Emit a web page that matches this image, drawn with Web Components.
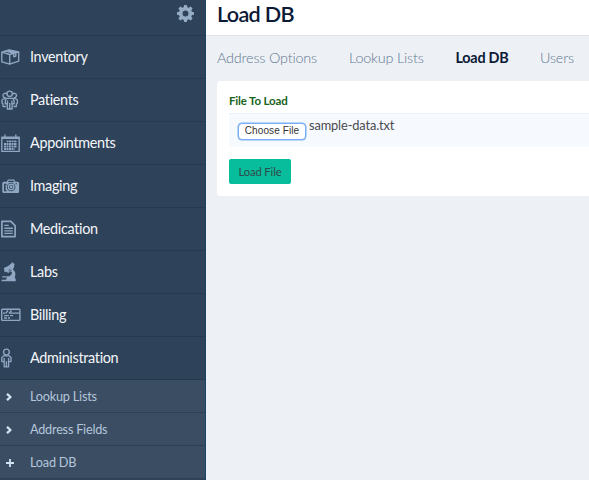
<!DOCTYPE html>
<html lang="en">
<head>
<meta charset="utf-8">
<title>Load DB</title>
<style>
html,body{margin:0;height:100%;overflow:hidden;background:#edf1f5;font-family:Lato,"Liberation Sans",sans-serif}
</style>
</head>
<body>
<app-shell></app-shell>
<script>
const define = (name, html, setup) => customElements.define(name, class extends HTMLElement {
  connectedCallback() {
    if (this.shadowRoot) return;
    this.attachShadow({mode: 'open'}).innerHTML = html;
    if (setup) setup(this, this.shadowRoot);
  }
});

const icons = {
  gear: '<path fill="currentColor" stroke="none" fill-rule="evenodd" d="M8 0h3l.6 2.6 1.5.6 2.3-1.4 2 2-1.4 2.3.6 1.5L19 8v3l-2.4.5-.6 1.5 1.4 2.2-2 2.1-2.3-1.4-1.5.6L11 19H8l-.6-2.5-1.5-.6-2.3 1.4-2-2.1L3 13l-.6-1.5L0 11V8l2.4-.4L3 6.1 1.6 3.8l2-2 2.3 1.4 1.5-.6zM9.5 6.2a3.3 3.3 0 1 0 0 6.6 3.3 3.3 0 0 0 0-6.6z"/>',
  box: '<path d="M1.8 4.2 9 1.8l9.7 2.1v9.3L9.7 16.2 1.8 13.8zM1.8 4.2l7.9 2.3 9-2.6M9.7 6.5V16M5.2 3.1l8.6 2.1v3.6l2-.7V4.6L8 2.3"/>',
  people: '<g><circle cx="9.7" cy="3.8" r="2.7"/><path d="M7 4.2A2.2 2.2 0 1 0 5.7 7.6M12.5 4.2a2.2 2.2 0 1 1 1.2 3.4M5.7 8.2H4.3L2 10v3l1 1v2.5h2.9M13.7 8.2h1.4l2.3 1.8v3l-1 1v2.5h-2.9M6.5 8.4l-1.2 2v3.3h2V19h4.8v-5.3h2v-3.3l-1.3-2zM7.5 10.5v3.3m4.4-3.3v3.3M9.7 13v5.6"/></g>',
  calendar: '<path d="M1.8 3.2h17.4v14.2H1.8zM5 .5V4M15.8.5V4"/><path stroke-width="2" d="M2 4h17"/><path stroke-width="1.8" stroke-dasharray="2 .5" d="M6.6 7.4H17M4 10H17M4 12.5H17M4 15H14.5"/>',
  camera: '<path fill="currentColor" stroke="none" fill-rule="evenodd" d="M3.7 2.7h3L8 .5h6.2l1.2 2.2h2.2q1.5 0 1.5 1.5v8.6q0 1.3-1.4 1.3h-14q-1.4 0-1.4-1.3V4.2q0-1.5 1.4-1.5zM8.6 1.7l-.7 1.4h6.4l-.8-1.4zM4 4.7v7.5h2.8v-1H5.6V5.7h1.1v-1zM11.1 3.7a4.3 4.3 0 1 0 0 8.6 4.3 4.3 0 0 0 0-8.6z"/><circle cx="11.1" cy="8" r="2.8"/><circle cx="11.1" cy="8" r=".8"/><path stroke="#2d4259" stroke-width="1" d="M15.5 4.8h1.5"/>',
  page: '<path stroke-width="1.7" d="M1.9 1.4h9l4.2 4.2v11H1.9z"/><path d="M4.3 5.4h4.5M4.3 8.2h8.5M4.3 10.8h8.5M4.3 13.4h8.5"/>',
  microscope: '<path fill="currentColor" stroke="none" d="m12 .3 2.7 1.6-.8 2.2.5.4-3.1 5.8-1.7-.5-1.2 1.1-1.9-1 .4-1.3-3.1-1 .4-1.8 3.1-1.2L10.9 2zM11.8 9.2l1-1.9c2.6 2 3.4 4.8 1.9 8.2l1 1.6v2.2H1.6v-1.6h4.3l1.1-2.1H2.2v-1.4h6.9q3.6-1.7 2.7-5z"/><path d="m4.4 9.3 4-1.4 3.2-5" stroke-width="2.2"/><circle cx="10" cy="8.5" r="1" stroke="#2d4259" stroke-width=".6"/>',
  card: '<rect x="1.7" y="1.2" width="18.2" height="11.2" rx=".7" stroke-width="1.4"/><path d="M10 5.1h9.5M4 7.6h5m1 0h3M4 10h3m1 0h2M3 5.1h2"/><path stroke-width="1.4" d="m5.5 5.5 2.5-3M9 5.5l2.5-3"/>',
  person: '<circle cx="6.4" cy="4" r="2.9"/><path d="M4.5 7.9H3.4L1.8 9.6v4h2.4v5.2h4.4v-5.2H11v-4L9.3 7.9zM4.2 9.9v3.7M8.6 9.9v3.7M6.4 13.3v5"/>',
  chevron: '<path stroke-width="2.3" d="m1 .8 3.5 3.2L1 7.2"/>',
  plus: '<path stroke-width="1.8" d="M4 0v8M0 4h8"/>'
};
const sizes = {gear:[17,17,19,19],box:[20,18,20,18],people:[20,20,20,20],calendar:[20,18,20,18],camera:[20,15,20,15],page:[18,18,18,18],microscope:[18,20,18,20],card:[21,14,21,14],person:[14,20,14,20],chevron:[6,8,6,8],plus:[8,8,8,8]};

define('ui-icon', '<style>:host{display:block;line-height:0}svg{display:block;fill:none;stroke:currentColor;stroke-width:1.35;stroke-linejoin:round}</style>', (el, root) => {
  const n = el.getAttribute('name'), [w,h,vw,vh] = sizes[n];
  root.innerHTML += `<svg width="${w}" height="${h}" viewBox="0 0 ${vw} ${vh}">${icons[n]}</svg>`;
});

define('nav-item', `<style>
:host{display:grid;grid-template-columns:30px 1fr;align-items:center;box-sizing:border-box;height:43px;border-bottom:1px solid #263a50;color:#f4f6f9;font-size:14.4px;line-height:20px;letter-spacing:-.32px}
ui-icon{color:#8fa7c2}
:host([sub]){height:33px;background:#3b4d63;border-color:#2c4056;color:#b3c6da;font-size:12.7px;letter-spacing:-.22px}
:host([sub]) ui-icon{color:#d0e2f2;padding:1px 0 0 6px}
:host([sub]) span{padding-bottom:1px}
</style><i></i><span><slot></slot></span>`, (el, root) => {
  const i = document.createElement('ui-icon');
  i.setAttribute('name', el.getAttribute('icon'));
  root.querySelector('i').replaceWith(i);
});

define('side-bar', `<style>
:host{display:block;box-sizing:border-box;width:206px;height:480px;background:#2e4259;border-right:1px solid #174565;overflow:hidden}
header{box-sizing:border-box;height:36px;border-bottom:1px solid #263a50;display:flex;justify-content:flex-end;padding:5px 11.5px 0 0;color:#94acc6}
</style>
<header><ui-icon name="gear"></ui-icon></header><nav><slot></slot></nav>`);

define('tab-item', `<style>:host{display:block;font-size:14.4px;line-height:20px;font-weight:300;color:#5f7694;white-space:nowrap;letter-spacing:-.18px}
:host([active]){font-weight:700;color:#0b1a36;letter-spacing:-.25px}</style><slot></slot>`);

define('file-field', `<style>
:host{display:block}
label{display:block;font-size:11.5px;line-height:14px;font-weight:700;color:#17641b;letter-spacing:-.16px}
.box{box-sizing:border-box;height:34px;margin-top:5px;background:#f6f9fe;border-top:1px solid #edf1f6;display:flex;gap:3px;padding:0 0 0 9px}
button{box-sizing:border-box;width:68px;height:17px;margin:8.5px 0 0;padding:0;border:1.5px solid #78aff5;box-shadow:0 0 0 .5px #78aff5;border-radius:4px;background:#fff;color:#333;font:10px/14px "Liberation Sans",sans-serif;letter-spacing:.1px;white-space:nowrap}
span{font-size:12.8px;line-height:18px;padding-top:2px;color:#494b50;letter-spacing:-.12px}
</style><label>File To Load</label><div class="box"><button>Choose File</button><span><slot></slot></span></div>`);

define('action-button', `<style>:host{display:block}button{display:block;width:62px;height:25px;padding:0;border:0;border-radius:2px;background:#08bd9b;color:#31494c;font:11.2px/25px Lato,sans-serif;letter-spacing:-.1px;white-space:nowrap}</style><button><slot></slot></button>`);

define('app-shell', `<style>
:host{display:grid;grid-template-columns:206px 1fr;height:480px;overflow:hidden}
main{min-width:0;background:#edf1f5}
h1{box-sizing:border-box;height:36px;margin:0;padding:0 0 0 11px;background:#fff;border-bottom:1px solid #dfe4e9;color:#0b1a36;font-size:21.6px;line-height:28px;font-weight:600;letter-spacing:-.7px}
.tabs{display:grid;grid-template-columns:132px 106.5px 84.5px 1fr;padding:12px 0 0 11px;height:33px}
section{box-sizing:border-box;height:115px;margin-left:11px;padding:13px 0 0 12px;background:#fff;border-radius:4px 0 0 4px}
action-button{margin-top:12px}
</style>
<side-bar>
<nav-item icon="box">Inventory</nav-item><nav-item icon="people">Patients</nav-item><nav-item icon="calendar">Appointments</nav-item><nav-item icon="camera">Imaging</nav-item><nav-item icon="page">Medication</nav-item><nav-item icon="microscope">Labs</nav-item><nav-item icon="card">Billing</nav-item><nav-item icon="person">Administration</nav-item>
<nav-item sub icon="chevron">Lookup Lists</nav-item><nav-item sub icon="chevron">Address Fields</nav-item><nav-item sub icon="plus">Load DB</nav-item>
</side-bar>
<main><h1>Load DB</h1>
<div class="tabs"><tab-item>Address Options</tab-item><tab-item>Lookup Lists</tab-item><tab-item active>Load DB</tab-item><tab-item>Users</tab-item></div>
<section><file-field>sample-data.txt</file-field><action-button>Load File</action-button></section></main>`);
</script>
</body>
</html>
